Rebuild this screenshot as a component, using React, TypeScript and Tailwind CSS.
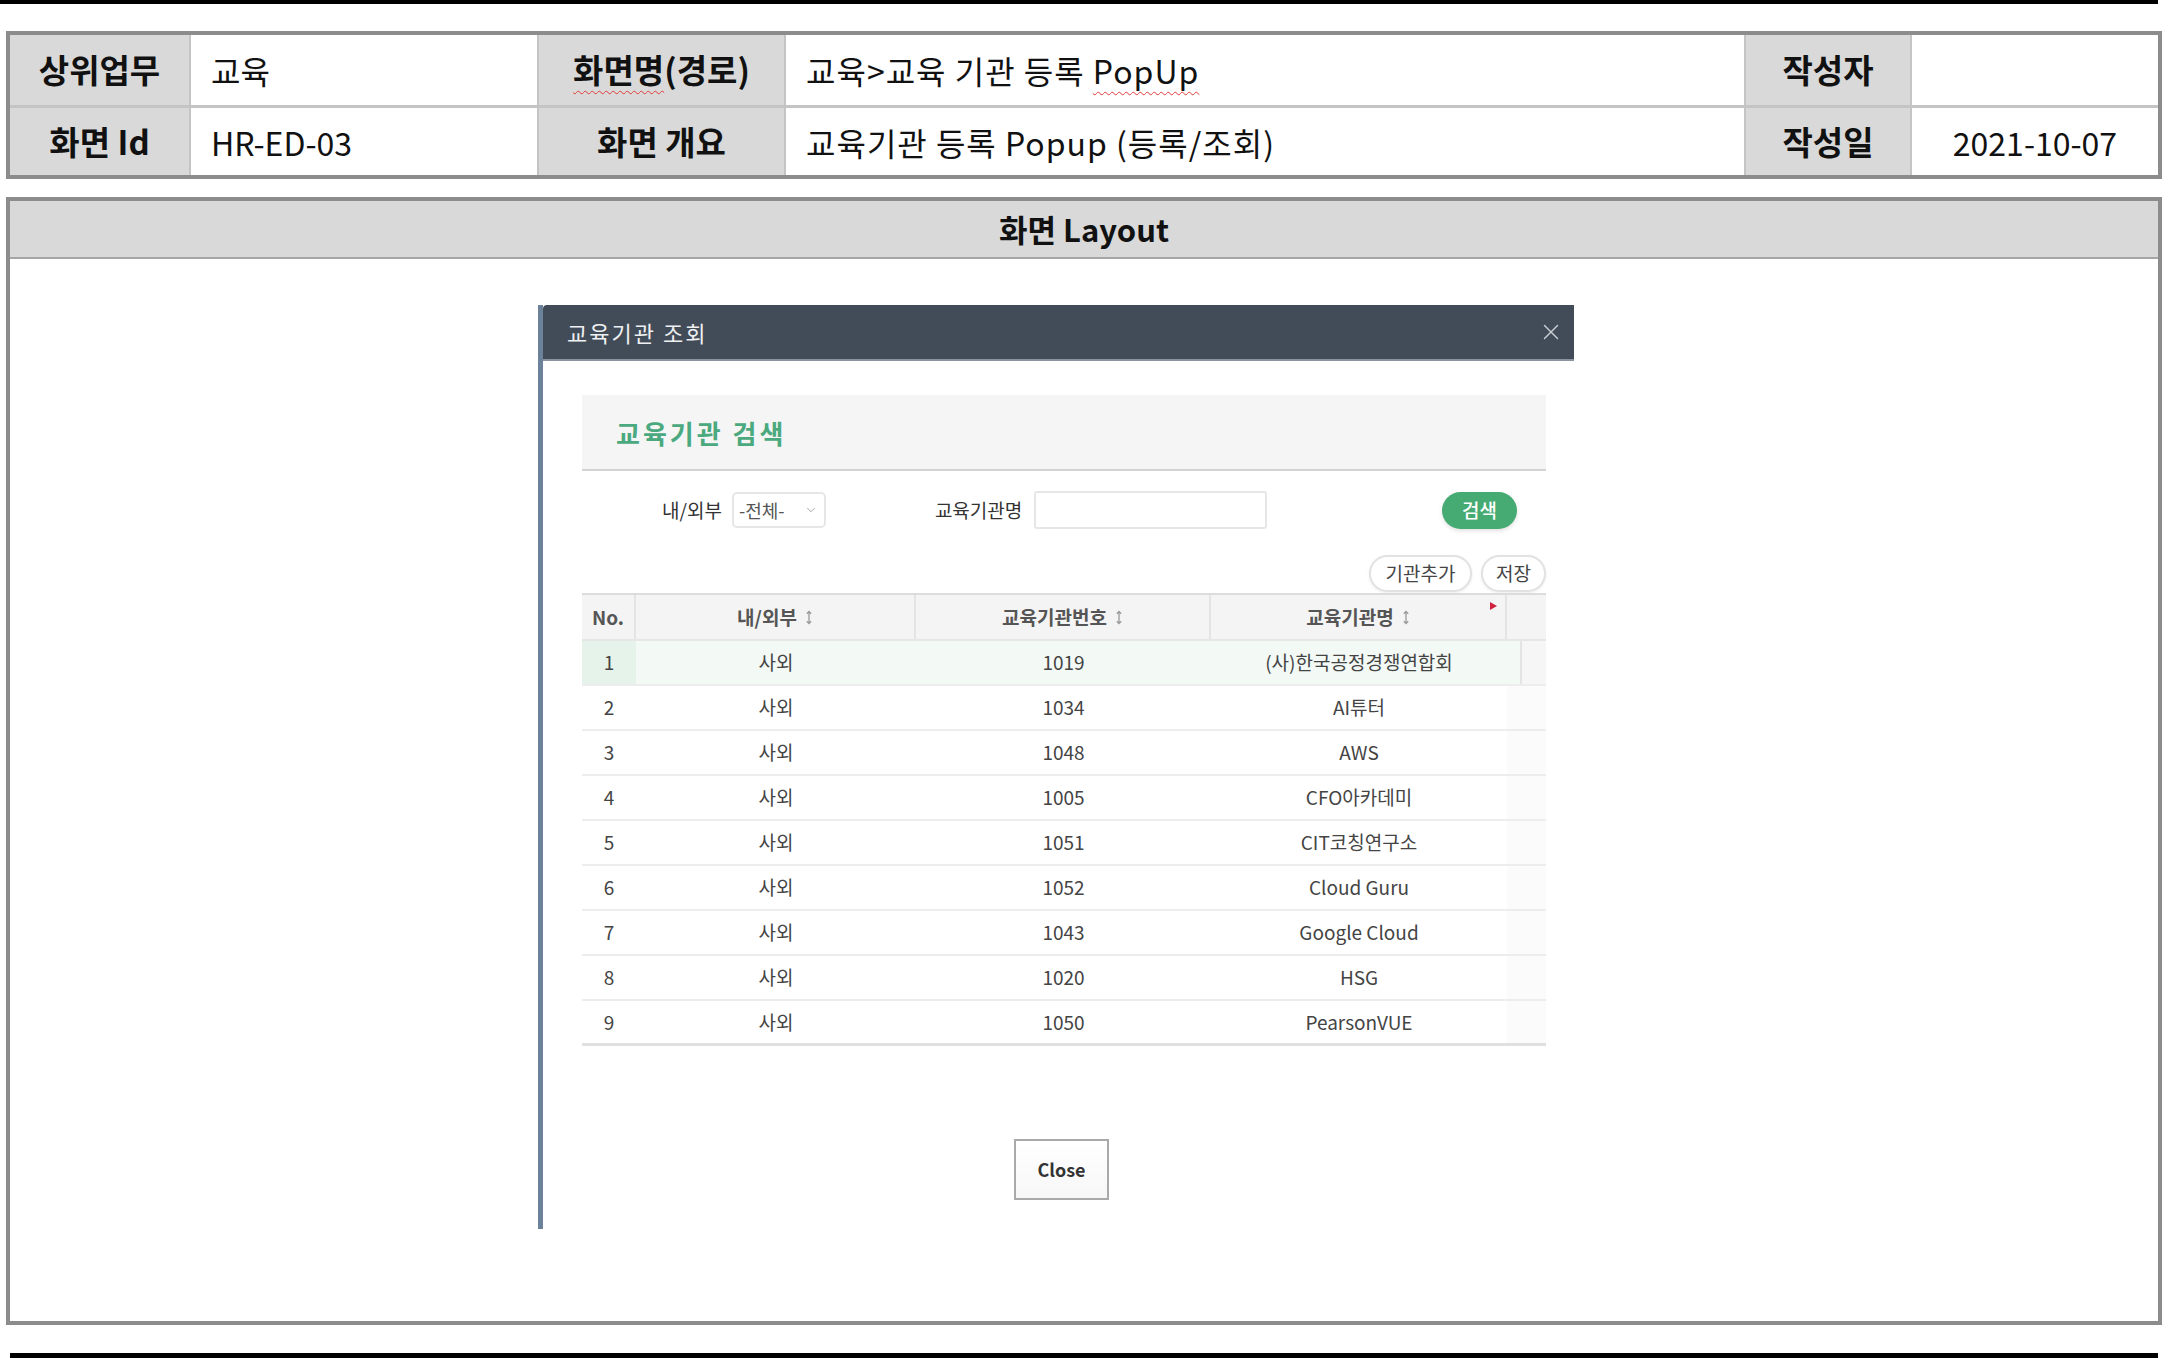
import { X, ChevronDown } from "lucide-react";

const ROWS = [
  { no: 1, type: "사외", code: "1019", name: "(사)한국공정경쟁연합회" },
  { no: 2, type: "사외", code: "1034", name: "AI튜터" },
  { no: 3, type: "사외", code: "1048", name: "AWS" },
  { no: 4, type: "사외", code: "1005", name: "CFO아카데미" },
  { no: 5, type: "사외", code: "1051", name: "CIT코칭연구소" },
  { no: 6, type: "사외", code: "1052", name: "Cloud Guru" },
  { no: 7, type: "사외", code: "1043", name: "Google Cloud" },
  { no: 8, type: "사외", code: "1020", name: "HSG" },
  { no: 9, type: "사외", code: "1050", name: "PearsonVUE" },
];

function SortIcon() {
  return (
    <svg width="8" height="15" viewBox="0 0 8 15" className="ml-2 inline-block text-[#9a9a9a]">
      <path d="M4 1.5v12M1.8 3.8 4 1.4l2.2 2.4M1.8 11.2 4 13.6l2.2-2.4" fill="none" stroke="currentColor" strokeWidth="1.3" />
    </svg>
  );
}

const label = "flex items-center justify-center bg-[#d9d9d9] font-bold text-[33px] text-[#111]";
const value = "flex items-center bg-white px-[20px] text-[32px] text-[#111]";
const spell = "underline decoration-wavy decoration-[#e23b3b] decoration-1 underline-offset-[7px]";

export default function App() {
  return (
    <div className="w-[2176px] h-[1358px] bg-white font-['Noto_Sans_CJK_KR','Noto_Sans',sans-serif] overflow-hidden">
      <div className="h-[4px] w-[2158px] bg-black" />

      {/* 문서 헤더 */}
      <div className="ml-[6px] mt-[27px] w-[2156px] border-[4px] border-[#8c8c8c]">
        <div className="grid grid-cols-[179px_346px_245px_958px_164px_246px] grid-rows-[70px_67px] gap-x-[2px] gap-y-[3px] bg-[#c4c4c4]">
          <div className={label}>상위업무</div>
          <div className={value}>교육</div>
          <div className={label}><span><span className={spell}>화면명</span>(경로)</span></div>
          <div className={value}><span className="tracking-[1px]">교육&gt;교육 기관 등록 <span className={spell}>PopUp</span></span></div>
          <div className={label}>작성자</div>
          <div className={value} />
          <div className={label}>화면 Id</div>
          <div className={value}>HR-ED-03</div>
          <div className={label}>화면 개요</div>
          <div className={value}><span className="tracking-[1px]">교육기관 등록 Popup (등록/조회)</span></div>
          <div className={label}>작성일</div>
          <div className={`${value} justify-center`}>2021-10-07</div>
        </div>
      </div>

      {/* 화면 Layout */}
      <div className="ml-[6px] mt-[18px] w-[2156px] h-[1128px] border-[4px] border-[#8c8c8c] flex flex-col">
        <div className="h-[58px] shrink-0 bg-[#d9d9d9] border-b-[2px] border-[#a6a6a6] flex items-center justify-center font-bold text-[31px] text-[#111]">
          화면 Layout
        </div>
        <div className="flex-1">
          <div className="ml-[528px] mt-[46px] w-[1036px] border-l-[5px] border-[#6c819a] flex flex-col">
            {/* title bar */}
            <div className="h-[56px] bg-[#424c58] border-b-[2px] border-[#8994a0] rounded-tl-[4px] flex items-center pl-[24px] pr-[10px]">
              <span className="text-[22px] tracking-[2px] text-[#eef0f2]">교육기관 조회</span>
              <X size={26} strokeWidth={1.3} className="ml-auto text-[#c9ced4]" />
            </div>

            <div className="pl-[39px] pr-[28px] pb-[29px] flex flex-col">
              {/* search panel */}
              <div className="mt-[34px] h-[76px] bg-[#f5f5f5] border-b-[2px] border-[#d3d3d3] flex items-center pl-[34px]">
                <span className="text-[26px] font-bold tracking-[3px] text-[#4aa97e]">교육기관 검색</span>
              </div>

              <div className="mt-[20px] h-[38px] flex items-center text-[19px] text-[#333]">
                <span className="ml-[80px]">내/외부</span>
                <div className="ml-[10px] w-[94px] h-[36px] border-2 border-[#e6e6e6] rounded-[5px] bg-white flex items-center pl-[5px] pr-[6px] text-[18px] text-[#555]">
                  <span>-전체-</span>
                  <ChevronDown size={14} strokeWidth={1.5} className="ml-auto text-[#999]" />
                </div>
                <span className="ml-[109px]">교육기관명</span>
                <div className="ml-[12px] w-[233px] h-[38px] border-2 border-[#e6e6e6] rounded-[3px] bg-white" />
                <button className="ml-auto mr-[29px] w-[75px] h-[37px] rounded-full bg-[#46ab73] text-white text-[19px] font-medium shadow-[0_2px_4px_rgba(0,0,0,0.12)]">
                  검색
                </button>
              </div>

              <div className="mt-[26px] mb-[1px] h-[37px] flex justify-end gap-[9px] text-[19px] text-[#444]">
                <button className="w-[103px] h-[37px] rounded-full border-2 border-[#e2e2e2] bg-white shadow-[0_1px_3px_rgba(0,0,0,0.08)]">기관추가</button>
                <button className="w-[65px] h-[37px] rounded-full border-2 border-[#e2e2e2] bg-white shadow-[0_1px_3px_rgba(0,0,0,0.08)]">저장</button>
              </div>

              {/* grid */}
              <div className="border-t-[2px] border-[#dcdcdc]">
                <div className="grid grid-cols-[54px_280px_295px_296px_39px] h-[46px] bg-[#f4f4f4] border-b-[2px] border-[#e6e6e6] text-[19px] font-bold text-[#555]">
                  <div className="flex items-center justify-center border-r-2 border-[#e4e4e4]">No.</div>
                  <div className="flex items-center justify-center border-r-2 border-[#e4e4e4]">내/외부<SortIcon /></div>
                  <div className="flex items-center justify-center border-r-2 border-[#e4e4e4]">교육기관번호<SortIcon /></div>
                  <div className="relative flex items-center justify-center border-r-2 border-[#e4e4e4]">
                    교육기관명<SortIcon />
                    <svg width="7" height="8" viewBox="0 0 7 8" className="absolute right-[8px] top-[7px]">
                      <path d="M0 0l7 4-7 4z" fill="#d0213f" />
                    </svg>
                  </div>
                  <div />
                </div>
                {ROWS.map((r, i) => (
                  <div
                    key={r.no}
                    className={`grid grid-cols-[54px_280px_295px_296px_39px] h-[45px] text-[19px] text-[#444] ${
                      i === ROWS.length - 1 ? "border-b-[3px] border-[#e0e0e0]" : "border-b-2 border-[#ededed]"
                    } ${i === 0 ? "bg-[#f3f9f5]" : "bg-white"}`}
                  >
                    <div className={`flex items-center justify-center ${i === 0 ? "bg-[#e6f3ea]" : ""}`}>{r.no}</div>
                    <div className="flex items-center justify-center">{r.type}</div>
                    <div className="flex items-center justify-center">{r.code}</div>
                    <div className="flex items-center justify-center">{r.name}</div>
                    {i === 0 ? (
                      <div className="flex">
                        <div className="w-[15px] bg-[#f3f9f5] border-r-2 border-[#e4e4e4]" />
                        <div className="flex-1 bg-[#f6f6f6]" />
                      </div>
                    ) : (
                      <div className="bg-[#fbfbfb]" />
                    )}
                  </div>
                ))}
              </div>

              <div className="mt-[93px] flex">
                <button className="ml-[432px] w-[95px] h-[61px] border-2 border-[#a9a9a9] bg-gradient-to-b from-white to-[#f7f7f7] text-[18px] font-bold text-[#333]">
                  Close
                </button>
              </div>
            </div>
          </div>
        </div>
      </div>

      <div className="ml-[10px] mt-[28px] h-[5px] w-[2148px] bg-black" />
    </div>
  );
}
